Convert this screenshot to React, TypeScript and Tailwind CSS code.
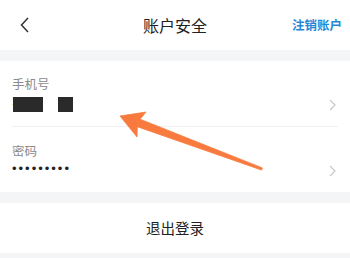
import React from "react";

const Chevron = () => (
  <svg width="7" height="12" viewBox="0 0 7 12" className="shrink-0">
    <path d="M1 1 L6 6 L1 11" fill="none" stroke="#c8c8c8" strokeWidth="1.2" />
  </svg>
);

export default function App() {
  return (
    <div
      className="relative w-[350px] h-[258px] overflow-hidden bg-[#f4f5f7]"
      style={{ fontFamily: '"Noto Sans CJK SC", "Noto Sans", sans-serif' }}
    >
      {/* header */}
      <div className="h-[50px] bg-white flex items-center px-[8px] relative">
        <div className="w-[60px] flex items-center pl-[12px]">
          <svg width="10" height="16" viewBox="0 0 10 16">
            <path d="M8 1 L1.5 8 L8 15" fill="none" stroke="#333" strokeWidth="1.5" />
          </svg>
        </div>
        <div className="flex-1 text-center text-[16px] text-[#222] leading-none">账户安全</div>
        <div className="w-[60px] text-right text-[12.5px] font-bold text-[#1e88d8] leading-none pr-0">注销账户</div>
      </div>

      <div className="h-[11px]" />

      {/* card */}
      <div className="bg-white">
        <div className="h-[65px] flex items-center pl-[12px] pr-[14px]">
          <div className="flex-1 flex flex-col">
            <div className="text-[12.5px] text-[#8a8a8a] leading-[18px]">手机号</div>
            <div className="mt-[4px] flex items-center h-[15px]">
              <span className="text-[10px] text-[#333] leading-none -mr-[5px] -mt-[6px] font-['Liberation_Sans']">1</span>
              <div className="w-[30px] h-[15px] bg-[#2a2a2a]" />
              <div className="w-[15px] ml-[15px] h-[15px] bg-[#2a2a2a]" />
            </div>
          </div>
          <div className="mt-[22px]"><Chevron /></div>
        </div>
        <div className="ml-[12px] mr-[12px] h-px bg-[#f0f0f0]" />
        <div className="h-[65px] flex items-center pl-[12px] pr-[14px]">
          <div className="flex-1 flex flex-col">
            <div className="text-[12.5px] text-[#8a8a8a] leading-[18px]">密码</div>
            <div className="mt-[1px] text-[13px] tracking-[2px] text-[#222] leading-[16px] font-['Liberation_Sans']">•••••••••</div>
          </div>
          <div className="mt-[22px]"><Chevron /></div>
        </div>
      </div>

      <div className="h-[11px]" />

      <div className="h-[50px] bg-white flex items-center justify-center text-[14.5px] text-[#222]">
        退出登录
      </div>

      {/* annotation arrow */}
      <svg className="absolute left-0 top-0 pointer-events-none" width="350" height="258">
        <polygon
          points="120,116 146,112 140.1,119.2 262.4,167.9 261.6,170.1 137.3,126.7 137,137"
          fill="#f97a3e"
          stroke="#f97a3e"
          strokeWidth="0.8"
          strokeLinejoin="round"
        />
      </svg>
    </div>
  );
}
